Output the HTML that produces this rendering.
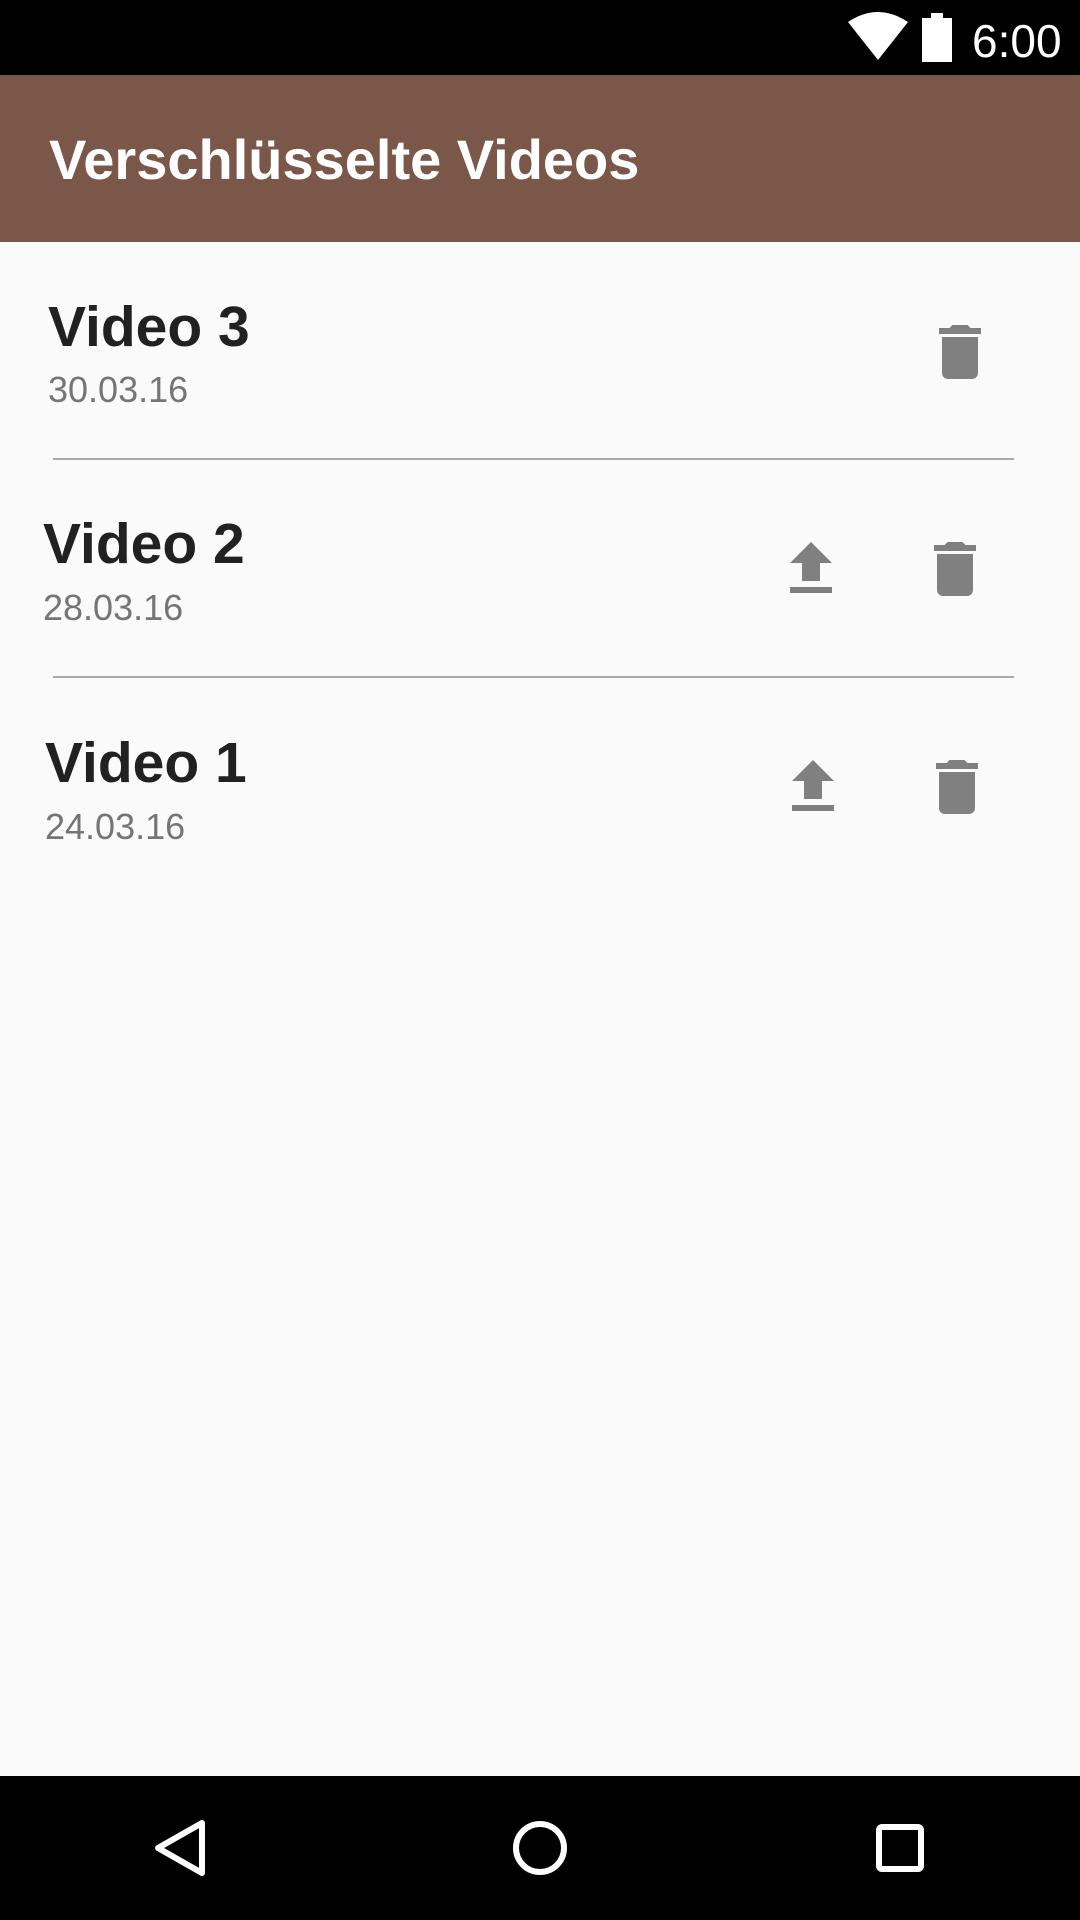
<!DOCTYPE html>
<html><head><meta charset="utf-8"><style>
body{margin:0;width:1080px;height:1920px;background:#fafafa;font-family:"Liberation Sans",sans-serif;position:relative;overflow:hidden}
.abs{position:absolute}
.t{font-size:57px;color:#212121;font-weight:bold;line-height:1}
.d{font-size:36px;color:#757575;line-height:1}
.div{position:absolute;left:53px;width:961px;height:2px;background:#a8a8a8}
</style></head><body>
<div class="abs" style="left:0;top:0;width:1080px;height:75px;background:#000"></div>
<svg class="abs" style="left:848px;top:12px" width="60" height="50" viewBox="0 0 60 50"><path d="M0 10 Q30 -10 60 10 L30 48Z" fill="#fff"/></svg>
<div class="abs" style="left:922px;top:18px;width:30px;height:44px;background:#fff"></div>
<div class="abs" style="left:931px;top:13px;width:12px;height:6px;background:#fff"></div>
<div class="abs" style="left:972px;top:14px;color:#fff;font-size:46px">6:00</div>
<div class="abs" style="left:0;top:75px;width:1080px;height:167px;background:#7b5749"></div>
<div class="abs" style="left:49px;top:127px;color:#fff;font-size:56px;font-weight:bold">Verschlüsselte Videos</div>

<div class="abs t" style="left:48px;top:299px">Video 3</div>
<div class="abs d" style="left:48px;top:372px">30.03.16</div>
<div class="div" style="top:458px"></div>
<div class="abs t" style="left:43px;top:516px">Video 2</div>
<div class="abs d" style="left:43px;top:590px">28.03.16</div>
<div class="div" style="top:676px"></div>
<div class="abs t" style="left:45px;top:735px">Video 1</div>
<div class="abs d" style="left:45px;top:809px">24.03.16</div>

<svg class="abs" style="left:924px;top:316px" width="72" height="72" viewBox="0 0 24 24"><path fill="#808080" d="M6 19c0 1.1.9 2 2 2h8c1.1 0 2-.9 2-2V7H6v12zM19 4h-3.5l-1-1h-5l-1 1H5v2h14V4z"/></svg>
<svg class="abs" style="left:775px;top:533px" width="72" height="72" viewBox="0 0 24 24"><path fill="#808080" d="M9 16h6v-6h4l-7-7-7 7h4zm-4 2h14v2H5z"/></svg>
<svg class="abs" style="left:919px;top:533px" width="72" height="72" viewBox="0 0 24 24"><path fill="#808080" d="M6 19c0 1.1.9 2 2 2h8c1.1 0 2-.9 2-2V7H6v12zM19 4h-3.5l-1-1h-5l-1 1H5v2h14V4z"/></svg>
<svg class="abs" style="left:777px;top:751px" width="72" height="72" viewBox="0 0 24 24"><path fill="#808080" d="M9 16h6v-6h4l-7-7-7 7h4zm-4 2h14v2H5z"/></svg>
<svg class="abs" style="left:921px;top:751px" width="72" height="72" viewBox="0 0 24 24"><path fill="#808080" d="M6 19c0 1.1.9 2 2 2h8c1.1 0 2-.9 2-2V7H6v12zM19 4h-3.5l-1-1h-5l-1 1H5v2h14V4z"/></svg>

<div class="abs" style="left:0;top:1776px;width:1080px;height:144px;background:#000"></div>
<svg class="abs" style="left:0;top:1776px" width="1080" height="144"><path d="M202 47 L202 97 L158 72Z" fill="none" stroke="#fff" stroke-width="6" stroke-linejoin="round"/><circle cx="540" cy="72" r="24" fill="none" stroke="#fff" stroke-width="6"/><rect x="879" y="51" width="42" height="42" rx="3" fill="none" stroke="#fff" stroke-width="6"/></svg>
</body></html>
